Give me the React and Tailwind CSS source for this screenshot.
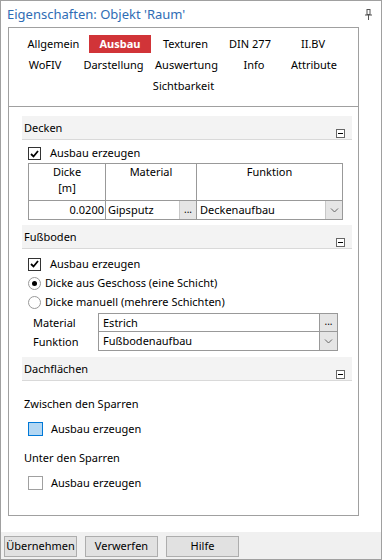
import React from 'react';

const font = { fontFamily: '"Noto Sans", "Open Sans", sans-serif' };

const Check = () => (
  <svg width="9" height="8" viewBox="0 0 9 8">
    <path d="M1 4 L3.5 6.5 L8 1" fill="none" stroke="#000" strokeWidth="1.8" />
  </svg>
);

const CheckBox = ({ checked }) => (
  <div className="w-[13px] h-[13px] border border-[#333] bg-white flex items-center justify-center">
    {checked && <Check />}
  </div>
);

const Radio = ({ checked }) => (
  <div className="w-[13px] h-[13px] rounded-full border border-[#999] bg-white flex items-center justify-center">
    {checked && <div className="w-[5px] h-[5px] rounded-full bg-black" />}
  </div>
);

const Minus = () => (
  <div className="w-[9px] h-[9px] border border-[#666] bg-white flex items-center justify-center">
    <div className="w-[5px] h-[1px] bg-black" />
  </div>
);

const Chevron = () => (
  <svg width="9" height="5" viewBox="0 0 9 5">
    <path d="M1 0.5 L4.5 4 L8 0.5" fill="none" stroke="#666" strokeWidth="1" />
  </svg>
);

const SectionHeader = ({ title }) => (
  <div className="h-[24px] bg-[#f3f3f3] border-b border-[#d9d9d9] flex justify-between pl-[2px] pr-[7px]">
    <span className="mt-[4px] leading-[15px]">{title}</span>
    <div className="mt-[13px]">
      <Minus />
    </div>
  </div>
);

const Tab = ({ label, w, active }) => (
  <div className="flex justify-center" style={{ width: w }}>
    {active ? (
      <span className="bg-[#d13438] text-white font-bold w-[62px] h-[18px] flex items-center justify-center">
        {label}
      </span>
    ) : (
      <span className="h-[18px] flex items-center">{label}</span>
    )}
  </div>
);

export default function App() {
  return (
    <div
      className="w-[382px] h-[560px] bg-white border border-[#a0a0a0] text-[11px] text-black flex flex-col overflow-hidden"
      style={font}
    >
      {/* Title */}
      <div className="h-[26px] flex items-start justify-between pl-[6px] pr-[9px]">
        <span className="text-[13px] leading-[18px] text-[#2f6db5] mt-[4px]">Eigenschaften: Objekt 'Raum'</span>
        <svg width="7" height="11" viewBox="0 0 7 11" className="mt-[8px]">
          <rect x="2" y="0.5" width="3" height="5" fill="none" stroke="#555" />
          <path d="M0 6 H7" stroke="#555" />
          <path d="M3.5 6 V11" stroke="#555" />
        </svg>
      </div>

      {/* Panel */}
      <div className="ml-[7px] w-[351px] h-[489px] border border-[#a0a0a0] flex flex-col">
        {/* Tabs */}
        <div className="pt-[7px] pb-[11px] border-b border-[#a0a0a0] flex flex-col gap-[3px]">
          <div className="flex pl-[11px]">
            <Tab label="Allgemein" w="67px" />
            <Tab label="Ausbau" w="66px" active />
            <Tab label="Texturen" w="65px" />
            <Tab label="DIN 277" w="64px" />
            <Tab label="II.BV" w="62px" />
          </div>
          <div className="flex pl-[4px]">
            <Tab label="WoFIV" w="64px" />
            <Tab label="Darstellung" w="73px" />
            <Tab label="Auswertung" w="73px" />
            <Tab label="Info" w="62px" />
            <Tab label="Attribute" w="58px" />
          </div>
          <div className="flex justify-center">
            <span className="h-[18px] flex items-center">Sichtbarkeit</span>
          </div>
        </div>

        {/* Content */}
        <div className="pl-[13px] pr-[6px] pt-[9px]">
          <SectionHeader title="Decken" />
          <div className="pl-[6px]">
            <div className="flex items-center h-[19px] mt-[4px]">
              <CheckBox checked />
              <span className="ml-[9px]">Ausbau erzeugen</span>
            </div>
            <div className="w-[315px] border border-[#999] flex flex-col">
              <div className="flex h-[37px] border-b border-[#999]">
                <div className="w-[77px] border-r border-[#999] text-center leading-[16px]">
                  Dicke
                  <br />[m]
                </div>
                <div className="w-[91px] border-r border-[#999] text-center leading-[16px]">Material</div>
                <div className="flex-1 text-center leading-[16px]">Funktion</div>
              </div>
              <div className="flex h-[18px]">
                <div className="w-[77px] border-r border-[#999] text-right pr-[1px] leading-[18px]">0.0200</div>
                <div className="w-[91px] border-r border-[#999] flex">
                  <span className="flex-1 pl-[2px] leading-[18px]">Gipsputz</span>
                  <span className="w-[17px] bg-[#e5e5e5] border-l border-[#c8c8c8] text-[10px] flex items-end justify-center pb-[2px]">...</span>
                </div>
                <div className="flex-1 flex">
                  <span className="flex-1 pl-[3px] leading-[18px]">Deckenaufbau</span>
                  <span className="w-[17px] bg-[#e5e5e5] border-l border-[#c8c8c8] flex items-center justify-center">
                    <Chevron />
                  </span>
                </div>
              </div>
            </div>
          </div>

          <div className="mt-[5px]">
            <SectionHeader title="Fußboden" />
          </div>
          <div className="pl-[6px]">
            <div className="flex items-center h-[20px] mt-[5px]">
              <CheckBox checked />
              <span className="ml-[9px]">Ausbau erzeugen</span>
            </div>
            <div className="flex items-center h-[19px]">
              <Radio checked />
              <span className="ml-[4px]">Dicke aus Geschoss (eine Schicht)</span>
            </div>
            <div className="flex items-center h-[19px]">
              <Radio />
              <span className="ml-[4px]">Dicke manuell (mehrere Schichten)</span>
            </div>
            <div className="flex mt-[1px] pl-[5px]">
              <div className="w-[65px] flex flex-col">
                <span className="h-[19px] leading-[19px]">Material</span>
                <span className="h-[19px] leading-[19px]">Funktion</span>
              </div>
              <div className="w-[240px] border border-[#999] flex flex-col">
                <div className="flex h-[18px] border-b border-[#999]">
                  <span className="flex-1 pl-[4px] leading-[17px]">Estrich</span>
                  <span className="w-[18px] bg-[#e5e5e5] border-l border-[#999] text-[10px] flex items-end justify-center pb-[2px]">...</span>
                </div>
                <div className="flex h-[18px]">
                  <span className="flex-1 pl-[4px] leading-[18px]">Fußbodenaufbau</span>
                  <span className="w-[18px] bg-[#e5e5e5] border-l border-[#999] flex items-center justify-center">
                    <Chevron />
                  </span>
                </div>
              </div>
            </div>
          </div>

          <div className="mt-[6px]">
            <SectionHeader title="Dachflächen" />
          </div>
          <div className="pl-[2px]">
            <div className="mt-[14px] h-[18px] leading-[18px]">Zwischen den Sparren</div>
            <div className="flex items-center h-[14px] mt-[9px] pl-[4px]">
              <div className="w-[15px] h-[14px] border border-[#0078d7] bg-[#b3d7f3]" />
              <span className="ml-[8px]">Ausbau erzeugen</span>
            </div>
            <div className="mt-[13px] h-[18px] leading-[18px]">Unter den Sparren</div>
            <div className="flex items-center h-[14px] mt-[9px] pl-[4px]">
              <div className="w-[15px] h-[14px] border border-[#a0a0a0] bg-white" />
              <span className="ml-[8px]">Ausbau erzeugen</span>
            </div>
          </div>
        </div>
      </div>

      {/* Bottom bar */}
      <div className="mt-[16px] flex-1 bg-[#f0f0f0] flex items-start gap-[8px] pl-[3px] pt-[4px]">
        <button className="w-[73px] h-[21px] bg-[#e1e1e1] border border-[#adadad] text-[11px]">Übernehmen</button>
        <button className="w-[73px] h-[21px] bg-[#e1e1e1] border border-[#adadad] text-[11px]">Verwerfen</button>
        <button className="w-[73px] h-[21px] bg-[#e1e1e1] border border-[#adadad] text-[11px]">Hilfe</button>
      </div>
    </div>
  );
}
